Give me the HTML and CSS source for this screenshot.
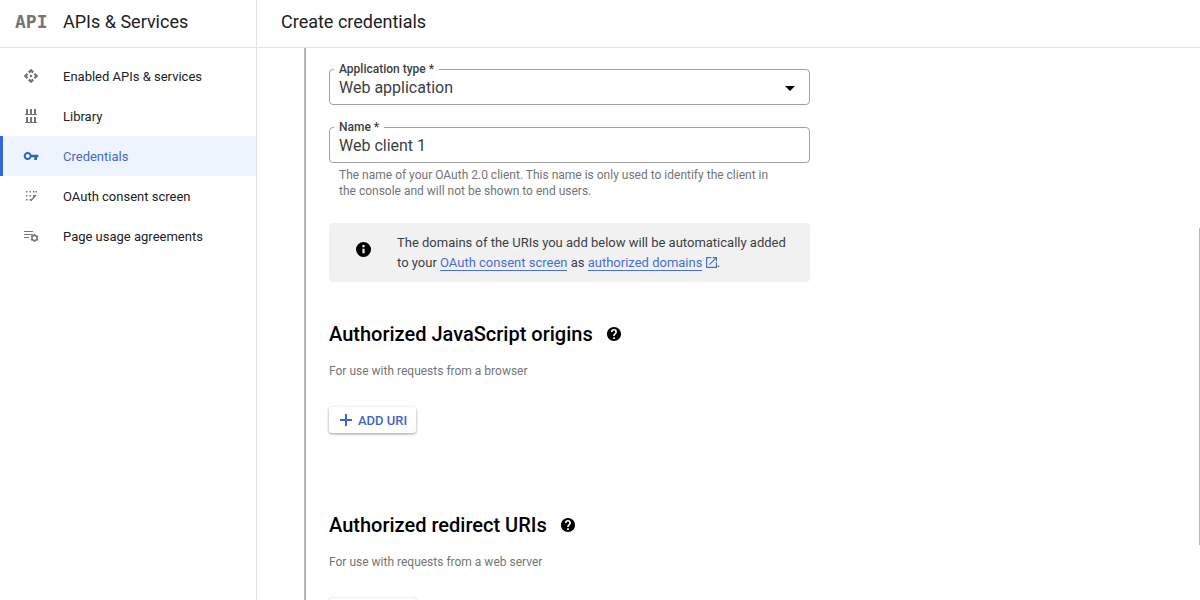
FILE: index.html
```
<!DOCTYPE html>
<html lang="en">

<head>
    <meta charset="UTF-8">
    <meta name="viewport" content="width=device-width, initial-scale=1.0">
    <title>Create credentials</title>
    <link rel="stylesheet" href="styles.css">
</head>

<body>
    <aside class="sidebar">
        <div class="sidebar-header">
            <span class="logo">API</span>
            <span class="product">APIs &amp; Services</span>
        </div>
        <nav class="nav">
            <a class="nav-item" href="#">
                <svg class="nav-icon" viewBox="0 0 24 24">
                    <circle cx="12" cy="12" r="2" />
                    <path d="M12 6l2.1 2.1 2.5-2.5L12 1 7.4 5.6l2.5 2.5zM6 12l2.1-2.1-2.5-2.5L1 12l4.6 4.6 2.5-2.5zM18 12l-2.1 2.1 2.5 2.5L23 12l-4.6-4.6-2.5 2.5zM12 18l-2.1-2.1-2.5 2.5L12 23l4.6-4.6-2.5-2.5z" />
                </svg>
                <span>Enabled APIs &amp; services</span>
            </a>
            <a class="nav-item" href="#">
                <svg class="nav-icon" viewBox="0 0 16 16">
                    <path d="M2 6h12v1H2zM3 1h2v5H3zM7 1h2v5H7zM11 1h2v5h-2zM2 14h12v1H2zM3 9h2v5H3zM7 9h2v5H7zM11 9h2v5h-2z" />
                </svg>
                <span>Library</span>
            </a>
            <a class="nav-item active" href="#">
                <svg class="nav-icon" viewBox="0 0 24 24">
                    <path d="M12.650 10C11.830 7.670 9.610 6 7 6c-3.310 0-6 2.690-6 6s2.690 6 6 6c2.610 0 4.830-1.670 5.650-4H17v4h4v-4h2v-4H12.650zM7 15c-1.650 0-3-1.350-3-3s1.350-3 3-3 3 1.350 3 3-1.350 3-3 3z" />
                </svg>
                <span>Credentials</span>
            </a>
            <a class="nav-item" href="#">
                <svg class="nav-icon" viewBox="0 0 16 16">
                    <path d="M3 3h1.500v1.500H3zM6.500 3H8v1.500H6.500zM10 3h1.500v1.500H10zM12.500 3H14v1.500h-1.500zM3 7h1.500v1.500H3zM6.500 7H8v1.500H6.500zM3 11h1.500v1.500H3zM6.500 11H8v1.500H6.500zM10 7h1.500v1.500H10zM12.500 6.500l1 1-5 5.500h-1v-1z" />
                </svg>
                <span>OAuth consent screen</span>
            </a>
            <a class="nav-item" href="#">
                <svg class="nav-icon" viewBox="0 0 16 16">
                    <path d="M1 3h9v1H1zM1 6h9v1H1zM1 9h5v1H1z" />
                    <circle class="gear" cx="11.500" cy="10" r="2.500" />
                    <path d="M10.700 6h1.600v1.500h-1.600zM10.700 12.500h1.600V14h-1.600zM7.600 8.700l.8-1.400 1.300.8-.8 1.400zM15.400 8.700l-.8-1.400-1.300.8.8 1.400zM7.600 11.300l.8 1.400 1.300-.8-.8-1.400zM15.400 11.300l-.8 1.400-1.300-.8.8-1.400z" />
                </svg>
                <span>Page usage agreements</span>
            </a>
        </nav>
    </aside>

    <main class="main">
        <header class="main-header">
            <h1>Create credentials</h1>
        </header>
        <div class="content">
            <form class="step">
                <div class="field">
                    <label for="app-type">Application type *</label>
                    <select id="app-type">
                        <option>Web application</option>
                    </select>
                    <svg class="arrow" viewBox="0 0 10 5">
                        <path d="M0 0h10L5 5z" />
                    </svg>
                </div>
                <div class="field">
                    <label for="client-name">Name *</label>
                    <input id="client-name" type="text" value="Web client 1">
                </div>
                <p class="hint">The name of your OAuth 2.0 client. This name is only used to identify the client in the console and will not be shown to end users.</p>

                <div class="notice">
                    <svg class="info-icon" viewBox="2 2 20 20">
                        <path d="M12 2a10 10 0 100 20 10 10 0 000-20zm1.500 15h-3v-6h3zm0-8h-3V6h3z" />
                    </svg>
                    <p>The domains of the URIs you add below will be automatically added to your <a href="#">OAuth consent screen</a> as <a href="#">authorized domains</a>
                        <svg class="external" viewBox="3 3 18 18">
                            <path d="M19 19H5V5h7V3H3v18h18v-9h-2zM14 3v2h3.600l-9.800 9.800 1.400 1.400L19 6.400V10h2V3z" />
                        </svg>.</p>
                </div>

                <section class="uris">
                    <h2>Authorized JavaScript origins
                        <svg class="help-icon" viewBox="2 2 20 20">
                            <path d="M12 2C6.480 2 2 6.480 2 12s4.480 10 10 10 10-4.480 10-10S17.520 2 12 2zm1.200 17h-2.400v-2.400h2.400zm2.200-7.700l-.9.900c-.8.800-1.300 1.400-1.300 2.800h-2.400v-.5c0-1.100.5-2.100 1.200-2.800l1.200-1.300c.4-.3.600-.8.600-1.400a1.900 1.900 0 00-3.800 0H7.600a4.300 4.300 0 018.600 0c0 .9-.3 1.700-.8 2.300z" />
                        </svg>
                    </h2>
                    <p class="sub">For use with requests from a browser</p>
                    <button class="add" type="button">
                        <svg class="plus" viewBox="0 0 12 12">
                            <path d="M5 0h2v5h5v2H7v5H5V7H0V5h5z" />
                        </svg>
                        ADD URI
                    </button>
                </section>

                <section class="uris">
                    <h2>Authorized redirect URIs
                        <svg class="help-icon" viewBox="2 2 20 20">
                            <path d="M12 2C6.480 2 2 6.480 2 12s4.480 10 10 10 10-4.480 10-10S17.520 2 12 2zm1.200 17h-2.400v-2.400h2.400zm2.200-7.700l-.9.900c-.8.800-1.300 1.400-1.300 2.800h-2.400v-.5c0-1.100.5-2.100 1.200-2.800l1.200-1.300c.4-.3.600-.8.600-1.400a1.900 1.900 0 00-3.800 0H7.600a4.300 4.300 0 018.600 0c0 .9-.3 1.700-.8 2.300z" />
                        </svg>
                    </h2>
                    <p class="sub">For use with requests from a web server</p>
                    <button class="add" type="button">
                        <svg class="plus" viewBox="0 0 12 12">
                            <path d="M5 0h2v5h5v2H7v5H5V7H0V5h5z" />
                        </svg>
                        ADD URI
                    </button>
                </section>
            </form>
            <div class="scroll-thumb"></div>
        </div>
    </main>
</body>

</html>
```
FILE: styles.css
```
* {
    box-sizing: border-box;
}

body {
    font-family: Roboto, Arial, sans-serif;
    font-size: 13px;
    color: #202124;
    background-color: #fff;
    display: flex;
    height: 100vh;
    margin: 0;
    overflow: hidden;
}

h1,
h2,
p {
    margin: 0;
}

svg {
    fill: currentColor;
    flex-shrink: 0;
}

.sidebar {
    width: 257px;
    flex-shrink: 0;
    border-right: 1px solid #e4e4e4;
}

.sidebar-header,
.main-header {
    display: flex;
    align-items: center;
    height: 48px;
    padding-bottom: 4px;
    border-bottom: 1px solid #e4e4e4;
}

.sidebar-header {
    padding-left: 15px;
}

.logo {
    width: 48px;
    font-family: "DejaVu Sans Mono", monospace;
    font-size: 18px;
    font-weight: bold;
    color: #757575;
}

.product,
h1 {
    font-size: 18px;
    font-weight: 400;
}

.nav {
    padding-top: 8px;
}

.nav-item {
    display: flex;
    align-items: center;
    gap: 24px;
    height: 40px;
    padding-left: 20px;
    border-left: 3px solid transparent;
    color: #202124;
    text-decoration: none;
}

.nav-icon {
    width: 16px;
    height: 16px;
    color: #757575;
}

.nav-item.active {
    background-color: #eef4fd;
    border-color: #3367d6;
    color: #4468c8;
}

.active .nav-icon {
    color: #2f62c0;
}

.gear {
    fill: none;
    stroke: currentColor;
    stroke-width: 1.4;
}

.main {
    display: flex;
    flex-direction: column;
    flex: 1;
    min-width: 0;
}

.main-header {
    flex-shrink: 0;
    padding-left: 24px;
}

.content {
    position: relative;
    flex: 1;
    overflow: hidden;
    padding-left: 47px;
}

.step {
    max-width: 506px;
    padding: 21px 0 24px 23px;
    border-left: 2px solid #b8b8b8;
}

.field {
    position: relative;
    height: 36px;
    margin-bottom: 22px;
    border: 1px solid #a0a0a0;
    border-radius: 4px;
}

.field label {
    position: absolute;
    top: -9px;
    left: 4px;
    padding: 0 5px;
    background-color: #fff;
    font-size: 12px;
    line-height: 16px;
    font-weight: 500;
    color: #3c4043;
}

.field select,
.field input {
    width: 100%;
    height: 34px;
    padding: 0 9px;
    border: none;
    outline: none;
    background: none;
    appearance: none;
    font-family: inherit;
    font-size: 16px;
    color: #3c4043;
}

.arrow {
    position: absolute;
    top: 16px;
    right: 14px;
    width: 10px;
    height: 5px;
    color: #000;
    pointer-events: none;
}

.hint {
    margin-top: -18px;
    padding: 0 32px 0 10px;
    font-size: 12px;
    line-height: 16px;
    color: #757575;
}

.notice {
    display: flex;
    gap: 26px;
    margin-top: 24px;
    padding: 10px 16px 9px 27px;
    border-radius: 4px;
    background-color: #f1f1f1;
    line-height: 20px;
    color: #3c4043;
}

.info-icon {
    width: 15px;
    height: 15px;
    margin-top: 9px;
    color: #000;
}

.notice a {
    color: #4a6fce;
    text-decoration: none;
    border-bottom: 1px solid #4a6fce;
}

.external {
    width: 11px;
    height: 11px;
    vertical-align: -1px;
    color: #4a6fce;
}

.uris {
    margin-top: 40px;
    margin-bottom: 80px;
}

h2 {
    display: flex;
    align-items: center;
    gap: 14px;
    font-size: 20px;
    line-height: 24px;
    font-weight: 500;
    color: #000;
}

.help-icon {
    width: 14px;
    height: 14px;
}

.sub {
    margin-top: 17px;
    font-size: 12px;
    line-height: 16px;
    color: #757575;
}

.add {
    display: flex;
    align-items: center;
    gap: 6px;
    height: 26px;
    margin-top: 28px;
    padding: 0 9px 0 11px;
    border: none;
    border-radius: 3px;
    background-color: #fff;
    box-shadow: 0 1px 3px rgba(0, 0, 0, 0.4);
    font-family: inherit;
    font-size: 13px;
    font-weight: 500;
    color: #3f66c9;
    cursor: pointer;
}

.plus {
    width: 12px;
    height: 12px;
}

.scroll-thumb {
    position: absolute;
    top: 180px;
    right: 0;
    width: 1px;
    height: 317px;
    background-color: #b8b8b8;
}
```
